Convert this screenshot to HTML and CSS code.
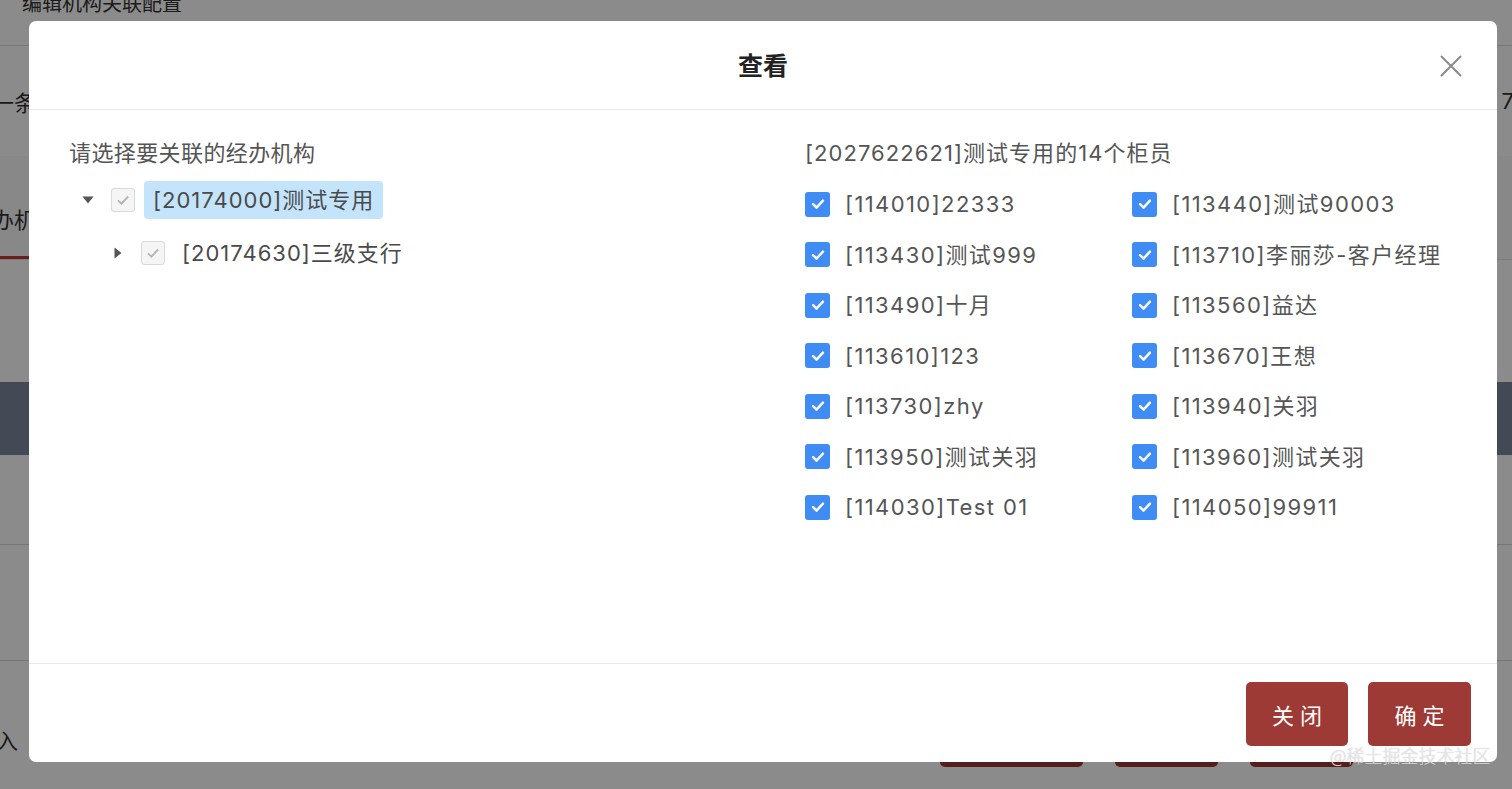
FILE: index.html
```html
<!DOCTYPE html>
<html lang="zh-CN">
<head>
<meta charset="utf-8">
<title>查看</title>
<link rel="stylesheet" href="styles.css">
</head>
<body>
<div class="app">
  <div class="app-top"><span class="app-top-text">编辑机构关联配置</span></div>
  <div class="app-toolbar"><span class="tb-left">一条</span><span class="tb-right">7</span></div>
  <div class="app-tabs"><span class="tab active">办机</span></div>
  <div class="app-gap"></div>
  <div class="app-thead"></div>
  <div class="app-row r1"></div>
  <div class="app-row r2"></div>
  <div class="app-foot"><span class="foot-text">入</span>
    <div class="foot-btns"><span class="bbtn w1"></span><span class="bbtn w2"></span><span class="bbtn w3"></span></div>
  </div>
</div>
<div class="mask"></div>

<div class="modal">
  <div class="modal-header">
    <div class="modal-title">查看</div>
    <svg class="modal-close" width="22" height="22" viewBox="0 0 22 22"><path d="M1.5 1.5 L20.5 20.5 M20.5 1.5 L1.5 20.5" stroke="#8a8a8a" stroke-width="2" fill="none" stroke-linecap="round"/></svg>
  </div>
  <div class="modal-body">
    <div class="col col-left">
      <div class="col-title">请选择要关联的经办机构</div>
      <div class="tree">
        <div class="tree-row">
          <span class="switcher"><svg width="12" height="8" viewBox="0 0 12 8"><path d="M0.5 0.5 H11.5 L6 7.5 Z" fill="#555"/></svg></span>
          <span class="tcheck"><svg width="18" height="18" viewBox="0 0 16 16"><path d="M3.5 8.3 L6.6 11.2 L12.6 4.9" stroke="#b5b5b5" stroke-width="1.7" fill="none"/></svg></span>
          <span class="tnode selected">[20174000]测试专用</span>
        </div>
        <div class="tree-row child">
          <span class="switcher"><svg width="8" height="12" viewBox="0 0 8 12"><path d="M0.5 0.5 V11.5 L7.5 6 Z" fill="#555"/></svg></span>
          <span class="tcheck"><svg width="18" height="18" viewBox="0 0 16 16"><path d="M3.5 8.3 L6.6 11.2 L12.6 4.9" stroke="#b5b5b5" stroke-width="1.7" fill="none"/></svg></span>
          <span class="tnode">[20174630]三级支行</span>
        </div>
      </div>
    </div>
    <div class="col col-right">
      <div class="col-title">[2027622621]测试专用的14个柜员</div>
      <div class="checks">
        <label class="chk"><span class="box"><svg viewBox="0 0 16 16"><path d="M3.6 8.2 L6.7 11.2 L12.4 5" stroke="#fff" stroke-width="2.2" fill="none" stroke-linecap="round" stroke-linejoin="round"/></svg></span><span class="lbl">[114010]22333</span></label>
        <label class="chk"><span class="box"><svg viewBox="0 0 16 16"><path d="M3.6 8.2 L6.7 11.2 L12.4 5" stroke="#fff" stroke-width="2.2" fill="none" stroke-linecap="round" stroke-linejoin="round"/></svg></span><span class="lbl">[113440]测试90003</span></label>
        <label class="chk"><span class="box"><svg viewBox="0 0 16 16"><path d="M3.6 8.2 L6.7 11.2 L12.4 5" stroke="#fff" stroke-width="2.2" fill="none" stroke-linecap="round" stroke-linejoin="round"/></svg></span><span class="lbl">[113430]测试999</span></label>
        <label class="chk"><span class="box"><svg viewBox="0 0 16 16"><path d="M3.6 8.2 L6.7 11.2 L12.4 5" stroke="#fff" stroke-width="2.2" fill="none" stroke-linecap="round" stroke-linejoin="round"/></svg></span><span class="lbl">[113710]李丽莎-客户经理</span></label>
        <label class="chk"><span class="box"><svg viewBox="0 0 16 16"><path d="M3.6 8.2 L6.7 11.2 L12.4 5" stroke="#fff" stroke-width="2.2" fill="none" stroke-linecap="round" stroke-linejoin="round"/></svg></span><span class="lbl">[113490]十月</span></label>
        <label class="chk"><span class="box"><svg viewBox="0 0 16 16"><path d="M3.6 8.2 L6.7 11.2 L12.4 5" stroke="#fff" stroke-width="2.2" fill="none" stroke-linecap="round" stroke-linejoin="round"/></svg></span><span class="lbl">[113560]益达</span></label>
        <label class="chk"><span class="box"><svg viewBox="0 0 16 16"><path d="M3.6 8.2 L6.7 11.2 L12.4 5" stroke="#fff" stroke-width="2.2" fill="none" stroke-linecap="round" stroke-linejoin="round"/></svg></span><span class="lbl">[113610]123</span></label>
        <label class="chk"><span class="box"><svg viewBox="0 0 16 16"><path d="M3.6 8.2 L6.7 11.2 L12.4 5" stroke="#fff" stroke-width="2.2" fill="none" stroke-linecap="round" stroke-linejoin="round"/></svg></span><span class="lbl">[113670]王想</span></label>
        <label class="chk"><span class="box"><svg viewBox="0 0 16 16"><path d="M3.6 8.2 L6.7 11.2 L12.4 5" stroke="#fff" stroke-width="2.2" fill="none" stroke-linecap="round" stroke-linejoin="round"/></svg></span><span class="lbl">[113730]zhy</span></label>
        <label class="chk"><span class="box"><svg viewBox="0 0 16 16"><path d="M3.6 8.2 L6.7 11.2 L12.4 5" stroke="#fff" stroke-width="2.2" fill="none" stroke-linecap="round" stroke-linejoin="round"/></svg></span><span class="lbl">[113940]关羽</span></label>
        <label class="chk"><span class="box"><svg viewBox="0 0 16 16"><path d="M3.6 8.2 L6.7 11.2 L12.4 5" stroke="#fff" stroke-width="2.2" fill="none" stroke-linecap="round" stroke-linejoin="round"/></svg></span><span class="lbl">[113950]测试关羽</span></label>
        <label class="chk"><span class="box"><svg viewBox="0 0 16 16"><path d="M3.6 8.2 L6.7 11.2 L12.4 5" stroke="#fff" stroke-width="2.2" fill="none" stroke-linecap="round" stroke-linejoin="round"/></svg></span><span class="lbl">[113960]测试关羽</span></label>
        <label class="chk"><span class="box"><svg viewBox="0 0 16 16"><path d="M3.6 8.2 L6.7 11.2 L12.4 5" stroke="#fff" stroke-width="2.2" fill="none" stroke-linecap="round" stroke-linejoin="round"/></svg></span><span class="lbl">[114030]Test 01</span></label>
        <label class="chk"><span class="box"><svg viewBox="0 0 16 16"><path d="M3.6 8.2 L6.7 11.2 L12.4 5" stroke="#fff" stroke-width="2.2" fill="none" stroke-linecap="round" stroke-linejoin="round"/></svg></span><span class="lbl">[114050]99911</span></label>
      </div>
    </div>
  </div>
  <div class="modal-footer">
    <button class="btn">关闭</button>
    <button class="btn">确定</button>
  </div>
</div>
<div class="watermark">@稀土掘金技术社区</div>
</body>
</html>
```
FILE: styles.css
```css
* { box-sizing: border-box; }
html, body { margin: 0; padding: 0; }
body {
  width: 1512px;
  height: 789px;
  overflow: hidden;
  position: relative;
  background: #fff;
  font-family: Inter, "Noto Sans CJK SC", sans-serif;
  color: #333;
}

/* background application (dimmed by mask) */
.app { width: 1512px; height: 789px; display: flex; flex-direction: column; background: #fff; }
.app-top { height: 46px; border-bottom: 1px solid #ddd; padding-left: 22px; background: #fff; overflow: hidden; }
.app-top-text { display: block; margin-top: -6px; font-size: 20px; line-height: 20px; color: #333; }
.app-toolbar { height: 110px; display: flex; justify-content: space-between; align-items: center; font-size: 22px; color: #333; }
.tb-left { margin-left: -8px; }
.tb-right { margin-right: -2px; }
.app-tabs { height: 104px; border-bottom: 1px solid #e0e0e0; display: flex; align-items: flex-end; background: #fafafa; }
.tab { font-size: 22px; padding: 0 0 22px 0; margin-left: -8px; border-bottom: 3px solid #c0392b; width: 60px; color: #333; }
.app-gap { height: 122px; }
.app-thead { height: 73px; background: #7e879f; }
.app-row { border-bottom: 1px solid #d8d8d8; }
.app-row.r1 { height: 90px; }
.app-row.r2 { height: 116px; }
.app-foot { flex: 1; position: relative; font-size: 22px; color: #333; }
.foot-text { position: absolute; left: -4px; top: 62px; }
.foot-btns { display: flex; gap: 32px; padding-left: 940px; padding-top: 62px; }
.bbtn { display: block; height: 44px; background: #9f3833; border-radius: 5px; }
.bbtn.w1 { width: 143px; }
.bbtn.w2 { width: 103px; }
.bbtn.w3 { width: 103px; }

.mask { position: absolute; inset: 0; background: rgba(0, 0, 0, 0.455); }

/* modal */
.modal {
  position: absolute;
  left: 29px;
  top: 21px;
  width: 1468px;
  height: 741px;
  background: #fff;
  border-radius: 7px;
  display: flex;
  flex-direction: column;
  overflow: hidden;
}
.modal-header {
  height: 89px;
  border-bottom: 1px solid #e8e8e8;
  display: flex;
  align-items: center;
  justify-content: center;
  position: relative;
  flex: none;
}
.modal-title { font-size: 25px; font-weight: 700; color: #222; margin-top: -2px; }
.modal-close { position: absolute; left: 1411px; top: 34px; }

.modal-body {
  flex: 1;
  display: grid;
  grid-template-columns: 734px 734px;
  padding-top: 28px;
}
.col-left { padding-left: 40px; }
.col-right { padding-left: 42px; }
.col-title { font-size: 22px; line-height: 30px; color: #555; letter-spacing: 1.05px; }
.col-left .col-title { letter-spacing: 0.4px; }

.tree { margin-top: 13px; display: flex; flex-direction: column; gap: 15px; }
.tree-row { display: flex; align-items: center; height: 38px; }
.tree-row.child { padding-left: 29px; }
.switcher { width: 38px; height: 38px; display: flex; align-items: center; justify-content: center; }
.tree-row.child .switcher { width: 39px; }
.tcheck {
  width: 24px; height: 24px;
  margin-left: 4px;
  border: 1px solid #d9d9d9;
  background: #f5f5f5;
  border-radius: 3px;
  display: flex; align-items: center; justify-content: center;
}
.tnode {
  margin-left: 9px;
  height: 38px;
  line-height: 38px;
  padding: 0 9px;
  font-size: 22px;
  color: #4a4a4a;
  border-radius: 4px;
  letter-spacing: 1px;
}
.tree-row.child .tnode { margin-left: 8px; }
.tnode.selected { background: #c3e4fb; }

.checks {
  margin-top: 21px;
  display: grid;
  grid-template-columns: 327px 1fr;
  row-gap: 20.5px;
}
.chk {
  display: flex;
  align-items: center;
  height: 30px;
  font-size: 22px;
  color: #555;
  white-space: nowrap;
}
.lbl { display: block; height: 30px; line-height: 30px; letter-spacing: 1.4px; }
.box {
  width: 25px; height: 25px;
  background: #3f8cf4;
  border-radius: 3px;
  margin-right: 15px;
  display: flex; align-items: center; justify-content: center;
  flex: none;
}
.box svg { width: 18px; height: 18px; }

.modal-footer {
  height: 99px;
  flex: none;
  border-top: 1px solid #e8e8e8;
  display: flex;
  justify-content: flex-end;
  align-items: flex-start;
  gap: 20px;
  padding: 18px 26px 0 0;
}
.btn {
  width: 103px;
  height: 64px;
  border: none;
  border-radius: 5px;
  background: #9e3a35;
  color: #fff;
  font-family: "Noto Sans CJK SC", sans-serif;
  font-size: 22px;
  letter-spacing: 6px;
  padding: 0 0 0 6px;
}
.btn:first-child { width: 102px; }

.watermark {
  position: absolute;
  left: 1330px;
  top: 742px;
  font-family: "Noto Sans CJK SC", sans-serif;
  font-size: 18px;
  font-weight: 300;
  color: rgba(240, 240, 240, 0.85);
  text-shadow: 0 0 1px rgba(110, 110, 110, 0.5);
}
```
